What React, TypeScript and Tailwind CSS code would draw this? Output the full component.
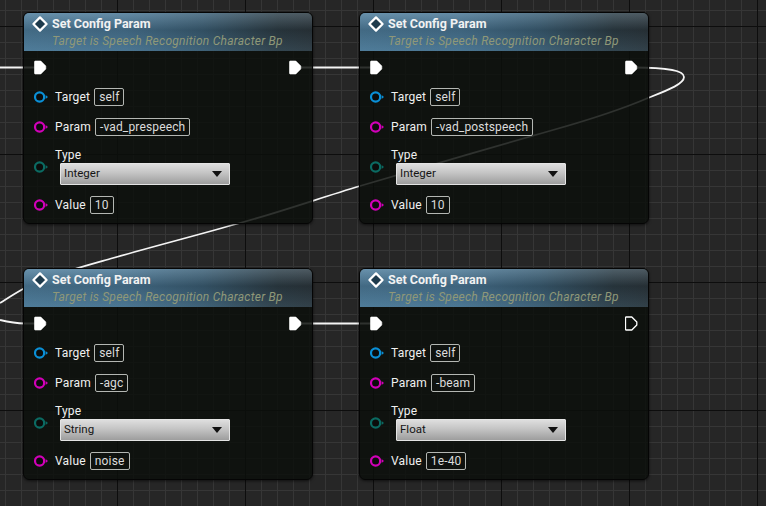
type NodeProps = {
  param: string;
  type: string;
  value: string;
  pos: string;
  execOutHollow?: boolean;
};

function ExecPin({ hollow }: { hollow?: boolean }) {
  return (
    <svg width="14" height="15" viewBox="0 0 14 15" className="block">
      <path
        d="M1.2 1h5.6l5 5v3l-5 5H1.2a.8.8 0 0 1-.7-.8V1.8a.8.8 0 0 1 .7-.8z"
        fill={hollow ? "none" : "#fff"}
        stroke="#fff"
        strokeWidth={hollow ? 1.3 : 0.6}
        strokeLinejoin="round"
      />
    </svg>
  );
}

function DataPin({ color }: { color: string }) {
  return (
    <svg width="16" height="12" viewBox="0 0 16 12" className="block shrink-0">
      <circle cx="5.6" cy="6" r="4.6" fill="#0b0c0b" stroke={color} strokeWidth="2.2" />
      <path d="M11.6 4 14 6l-2.4 2z" fill={color} />
    </svg>
  );
}

function TextBox({ children }: { children: string }) {
  return (
    <span className="flex h-[18px] items-center rounded-[2px] border border-[#b4b7b3] px-[4px] text-[12px] leading-none tracking-[0.15px] text-[#dcdcdc]">
      {children}
    </span>
  );
}

function PinRow({ color, label, value }: { color: string; label: string; value: string }) {
  return (
    <div className="flex h-[18px] items-center">
      <div className="ml-[10px] w-[21px]">
        <DataPin color={color} />
      </div>
      <span className="mr-[4px] text-[12px] tracking-[0.2px] text-[#f0f0f0]">{label}</span>
      <TextBox>{value}</TextBox>
    </div>
  );
}

function ConfigNode({ param, type, value, pos, execOutHollow }: NodeProps) {
  return (
    <div
      className={`absolute h-[212px] w-[290px] overflow-hidden rounded-[6px] border border-[#050505] bg-[#0c0f0c]/85 shadow-[0_1px_3px_rgba(0,0,0,0.6)] ${pos}`}
    >
      <div className="relative h-[38px] bg-[linear-gradient(180deg,rgba(170,200,220,0.28)_0%,rgba(20,40,55,0.22)_45%,rgba(80,125,155,0.22)_100%),linear-gradient(90deg,#4f7c99_0%,#4a7490_35%,#3a5a6e_62%,#2b363b_88%,#2a3033_100%)] pl-[28px]">
        <svg width="18" height="18" viewBox="0 0 18 18" className="absolute left-[7px] top-[2px]">
          <path d="M9 2.4 15.6 9 9 15.6 2.4 9z" fill="#1d3a4c" stroke="#fff" strokeWidth="2.2" strokeLinejoin="round" />
        </svg>
        <div className="pt-[3px] text-[12.5px] font-bold leading-[16px] text-[#f2f2f2]">Set Config Param</div>
        <div className="pt-[1px] text-[12px] italic leading-[16px] tracking-[0.25px] text-[#8f9878]">
          Target is Speech Recognition Character Bp
        </div>
      </div>
      <div className="mt-[9px] flex h-[15px] items-center justify-between pl-[10px] pr-[9px]">
        <ExecPin />
        <ExecPin hollow={execOutHollow} />
      </div>
      <div className="mt-[13px] flex flex-col gap-[12px]">
        <PinRow color="#0a8fd6" label="Target" value="self" />
        <PinRow color="#d100b8" label="Param" value={param} />
      </div>
      <div className="mt-[12px] flex">
        <div className="ml-[10px] flex w-[21px] items-center pt-[1px]">
          <DataPin color="#0b6a62" />
        </div>
        <div>
          <div className="h-[14px] text-[12px] leading-[14px] tracking-[0.2px] text-[#f0f0f0]">Type</div>
          <div className="ml-[5px] mt-[1px] flex h-[22px] w-[170px] items-center justify-between rounded-[1px] border border-[#e4e4e4] bg-[linear-gradient(180deg,#dedede_0%,#c4c4c4_45%,#9d9d9d_100%)] pl-[3px] pr-[7px] text-[11.5px] text-[#151515]">
            <span>{type}</span>
            <svg width="10" height="6" viewBox="0 0 10 6" className="block">
              <path d="M0 0h10L5 6z" fill="#111" />
            </svg>
          </div>
        </div>
      </div>
      <div className="mt-[11px]">
        <PinRow color="#d100b8" label="Value" value={value} />
      </div>
    </div>
  );
}

export default function App() {
  return (
    <div className="relative h-[506px] w-[766px] overflow-hidden bg-[#262626] font-['Roboto',sans-serif]">
      {/* graph paper: minor every 16px, major every 128px */}
      <div className="absolute inset-0 bg-[linear-gradient(#0d0d0d_1px,transparent_1px),linear-gradient(90deg,#0d0d0d_1px,transparent_1px),linear-gradient(#363636_1px,transparent_1px),linear-gradient(90deg,#363636_1px,transparent_1px)] bg-[size:128px_128px,128px_128px,16px_16px,16px_16px] bg-[position:-11px_26px,-11px_26px,-11px_10px,-11px_10px]" />

      <svg width="766" height="506" viewBox="0 0 766 506" className="absolute inset-0" fill="none" stroke="#f4f4f4" strokeWidth="2">
        <path d="M0 67.5H36" />
        <path d="M298 67.5H372" />
        <path d="M634 67.5C665 67.5 684 70 684 77C684 84 668 90 648 98C620 110 585 121 553 130C490 148 420 168 360 186C320 198 280 212 240 223C198 235 155 246 113 258C85 266 50 275 23 289C14 294 8 298 0 303" strokeWidth="1.8" />
        <path d="M0 320C8 322 14 323.5 25 323.5H36" />
        <path d="M298 323.5H372" />
      </svg>

      <ConfigNode pos="left-[23px] top-[12px]" param="-vad_prespeech" type="Integer" value="10" />
      <ConfigNode pos="left-[359px] top-[12px]" param="-vad_postspeech" type="Integer" value="10" />
      <ConfigNode pos="left-[23px] top-[268px]" param="-agc" type="String" value="noise" />
      <ConfigNode pos="left-[359px] top-[268px]" param="-beam" type="Float" value="1e-40" execOutHollow />
    </div>
  );
}
